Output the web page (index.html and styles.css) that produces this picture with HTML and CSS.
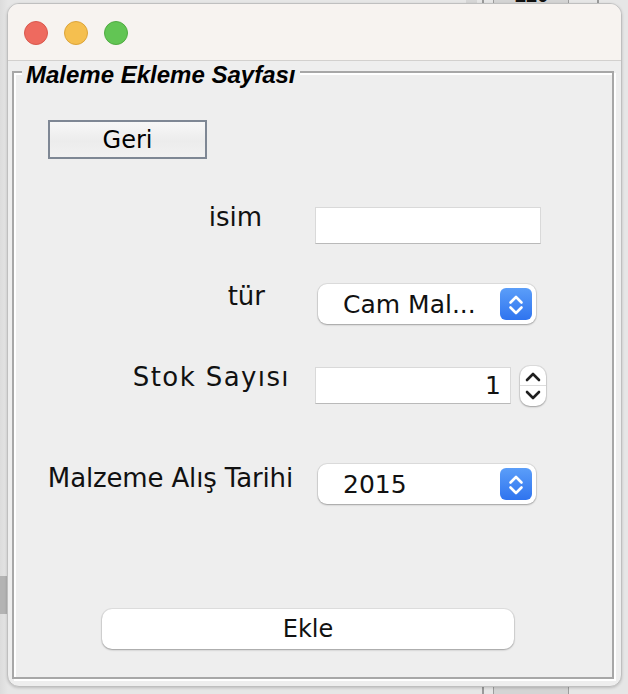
FILE: index.html
```html
<!DOCTYPE html>
<html lang="tr">
<head>
<meta charset="utf-8">
<title>Maleme Ekleme Sayfası</title>
<link rel="stylesheet" href="styles.css">
</head>
<body>
<div class="desktop">
  <div class="bg-strip bg-strip-top"></div>
  <div class="bg-line bg-line-a"></div>
  <div class="bg-box bg-box-top"><span class="bg-num">220</span></div>
  <div class="bg-line bg-line-b"></div>
  <div class="bg-side"></div>
  <div class="bg-line bg-line-c"></div>
  <div class="bg-box bg-box-bottom"></div>

  <div class="window">
    <div class="titlebar">
      <span class="light light-red"></span>
      <span class="light light-yellow"></span>
      <span class="light light-green"></span>
    </div>
    <div class="content">
      <div class="group">
        <div class="legend">Maleme Ekleme Sayfası</div>

        <button class="btn-geri" type="button">Geri</button>

        <div class="row row-isim">
          <div class="label-col"><span class="label label-isim">isim</span></div>
          <div class="textfield textfield-wide"></div>
        </div>

        <div class="row row-tur">
          <div class="label-col"><span class="label label-tur">tür</span></div>
          <div class="combo">
            <span class="combo-text">Cam Mal...</span>
            <span class="combo-arrow">
              <svg width="32" height="32" viewBox="0 0 32 32"><path d="M10.5 14.5 L16 9 L21.5 14.5 M10.5 19.5 L16 25 L21.5 19.5" fill="none" stroke="#fff" stroke-width="2.6" stroke-linecap="round" stroke-linejoin="round"/></svg>
            </span>
          </div>
        </div>

        <div class="row row-stok">
          <div class="label-col"><span class="label label-stok">Stok Sayısı</span></div>
          <div class="textfield textfield-num"><span class="num">1</span></div>
          <div class="spinner">
            <svg width="26" height="40" viewBox="0 0 26 40"><path d="M7 14 L13 8 L19 14" fill="none" stroke="#1f1f1f" stroke-width="2.6" stroke-linecap="round" stroke-linejoin="round"/><line x1="0" y1="19.5" x2="26" y2="19.5" stroke="#dcdcdc" stroke-width="1"/><path d="M7 26 L13 32 L19 26" fill="none" stroke="#1f1f1f" stroke-width="2.6" stroke-linecap="round" stroke-linejoin="round"/></svg>
          </div>
        </div>

        <div class="row row-tarih">
          <div class="label-col"><span class="label label-tarih">Malzeme Alış Tarihi</span></div>
          <div class="combo">
            <span class="combo-text">2015</span>
            <span class="combo-arrow">
              <svg width="32" height="32" viewBox="0 0 32 32"><path d="M10.5 14.5 L16 9 L21.5 14.5 M10.5 19.5 L16 25 L21.5 19.5" fill="none" stroke="#fff" stroke-width="2.6" stroke-linecap="round" stroke-linejoin="round"/></svg>
            </span>
          </div>
        </div>

        <button class="btn-ekle" type="button">Ekle</button>
      </div>
    </div>
  </div>
</div>
</body>
</html>
```
FILE: styles.css
```css
* { box-sizing: border-box; }

html, body {
  margin: 0;
  padding: 0;
}

body {
  width: 628px;
  height: 694px;
  overflow: hidden;
  background: #e4e4e4;
  font-family: "DejaVu Sans", "Noto Sans", sans-serif;
  color: #111;
}

.desktop {
  position: relative;
  width: 628px;
  height: 694px;
  padding: 3px 0 0 7px;
  background: linear-gradient(90deg, #dcdcdc 0, #e6e6e6 8px, #e6e6e6 100%);
}

/* background desktop pieces peeking out */
.bg-strip-top {
  position: absolute;
  left: 466px;
  top: 0;
  width: 11px;
  height: 4px;
  background: #d6d6d6;
}
.bg-line {
  position: absolute;
  width: 2px;
  background: #9a9a9a;
}
.bg-line-a { left: 482px; top: 0; height: 4px; }
.bg-line-b { left: 597px; top: 0; height: 6px; }
.bg-line-c { left: 482px; top: 686px; height: 8px; }
.bg-box {
  position: absolute;
  left: 493px;
  width: 76px;
  border-left: 1px solid #9d9d9d;
  border-right: 1px solid #9d9d9d;
  background: #d4d4d4;
  overflow: hidden;
}
.bg-box-top { top: 0; height: 4px; }
.bg-box-bottom { top: 686px; height: 8px; }
.bg-num {
  position: absolute;
  left: 21px;
  top: -16px;
  font: bold 20px "Liberation Sans", sans-serif;
  color: #111;
}
.bg-side {
  position: absolute;
  left: 0;
  top: 576px;
  width: 7px;
  height: 38px;
  background: #b3b3b3;
}

/* window */
.window {
  position: relative;
  width: 615px;
  height: 684px;
  border: 1px solid #bfbfbf;
  border-radius: 12px;
  background: #eeeeee;
  overflow: hidden;
  box-shadow: 0 1px 3px rgba(0,0,0,0.18);
}

.titlebar {
  height: 57px;
  background: #f7f3f0;
  border-bottom: 1px solid #d2d0ce;
  display: flex;
  align-items: center;
  gap: 16px;
  padding-left: 16px;
  padding-top: 1px;
}

.light {
  width: 24px;
  height: 24px;
  border-radius: 50%;
}
.light-red { background: #ee6a5f; border: 1px solid #d9584d; }
.light-yellow { background: #f5bf4f; border: 1px solid #dca43a; }
.light-green { background: #62c554; border: 1px solid #50ab42; }

.content {
  padding: 10px 0 0 4px;
}

/* etched titled border */
.group {
  position: relative;
  width: 602px;
  height: 608px;
  border: 2px solid #a7a7a7;
  box-shadow: inset 2px 2px 0 #ffffff, 2px 2px 0 #ffffff;
  display: flex;
  flex-direction: column;
  align-items: flex-start;
}

.legend {
  position: absolute;
  left: 8px;
  top: -10px;
  padding: 0 4px;
  background: #eeeeee;
  font: italic bold 24px/24px "Liberation Sans", Arial, sans-serif;
  color: #000;
  white-space: nowrap;
}

.btn-geri {
  margin: 47px 0 0 34px;
  width: 159px;
  height: 39px;
  border: 2px solid #7e8794;
  background: linear-gradient(#f7f7f7, #ececec 55%, #f1f1f1);
  font: 24px/1 "DejaVu Sans", sans-serif;
  color: #000;
  padding: 0;
}

.row {
  display: flex;
  align-items: flex-start;
}
.row-isim { margin-top: 48px; height: 37px; }
.row-tur { margin-top: 40px; height: 40px; }
.row-stok { margin-top: 42px; height: 40px; }
.row-tarih { margin-top: 58px; height: 40px; }

.label-col {
  width: 301px;
  display: flex;
  justify-content: flex-end;
}

.label {
  font-size: 26px;
  line-height: 30px;
  color: #111;
  white-space: nowrap;
}
.label-isim { padding-right: 53px; margin-top: -5px; }
.label-tur { padding-right: 50px; margin-top: -3px; }
.label-stok { padding-right: 25px; margin-top: -4px; letter-spacing: 1.4px; }
.label-tarih { padding-right: 22px; margin-top: -1px; letter-spacing: -0.15px; }

.textfield {
  height: 37px;
  background: #fff;
  border: 1px solid #d9d9d9;
  border-bottom-color: #b9b9b9;
}
.textfield-wide { width: 226px; }
.textfield-num {
  width: 196px;
  margin-top: 1px;
  display: flex;
  align-items: center;
  justify-content: flex-end;
  padding-right: 9px;
}
.num {
  font-size: 25px;
  color: #111;
}

.combo {
  margin-left: 3px;
  width: 218px;
  height: 40px;
  background: #fff;
  border-radius: 9px;
  box-shadow: 0 0 0 1px rgba(0,0,0,0.07), 0 1px 2px rgba(0,0,0,0.28);
  display: flex;
  align-items: center;
  justify-content: space-between;
  padding: 0 4px 0 25px;
}
.combo-text {
  font-size: 25px;
  color: #111;
  white-space: nowrap;
}
.combo-arrow {
  width: 32px;
  height: 32px;
  border-radius: 6px;
  background: linear-gradient(#5b9ef9, #2f74ef);
  display: flex;
}

.spinner {
  margin-left: 9px;
  width: 26px;
  height: 40px;
  background: #fff;
  border-radius: 10px;
  box-shadow: 0 0 0 1px rgba(0,0,0,0.07), 0 1px 2px rgba(0,0,0,0.28);
  display: flex;
  overflow: hidden;
}

.btn-ekle {
  margin: 105px 0 0 88px;
  width: 412px;
  height: 40px;
  border: none;
  border-radius: 10px;
  background: #fff;
  box-shadow: 0 0 0 1px rgba(0,0,0,0.06), 0 1px 2px rgba(0,0,0,0.3);
  font: 24px/1 "DejaVu Sans", sans-serif;
  color: #111;
  padding: 0;
}
```
